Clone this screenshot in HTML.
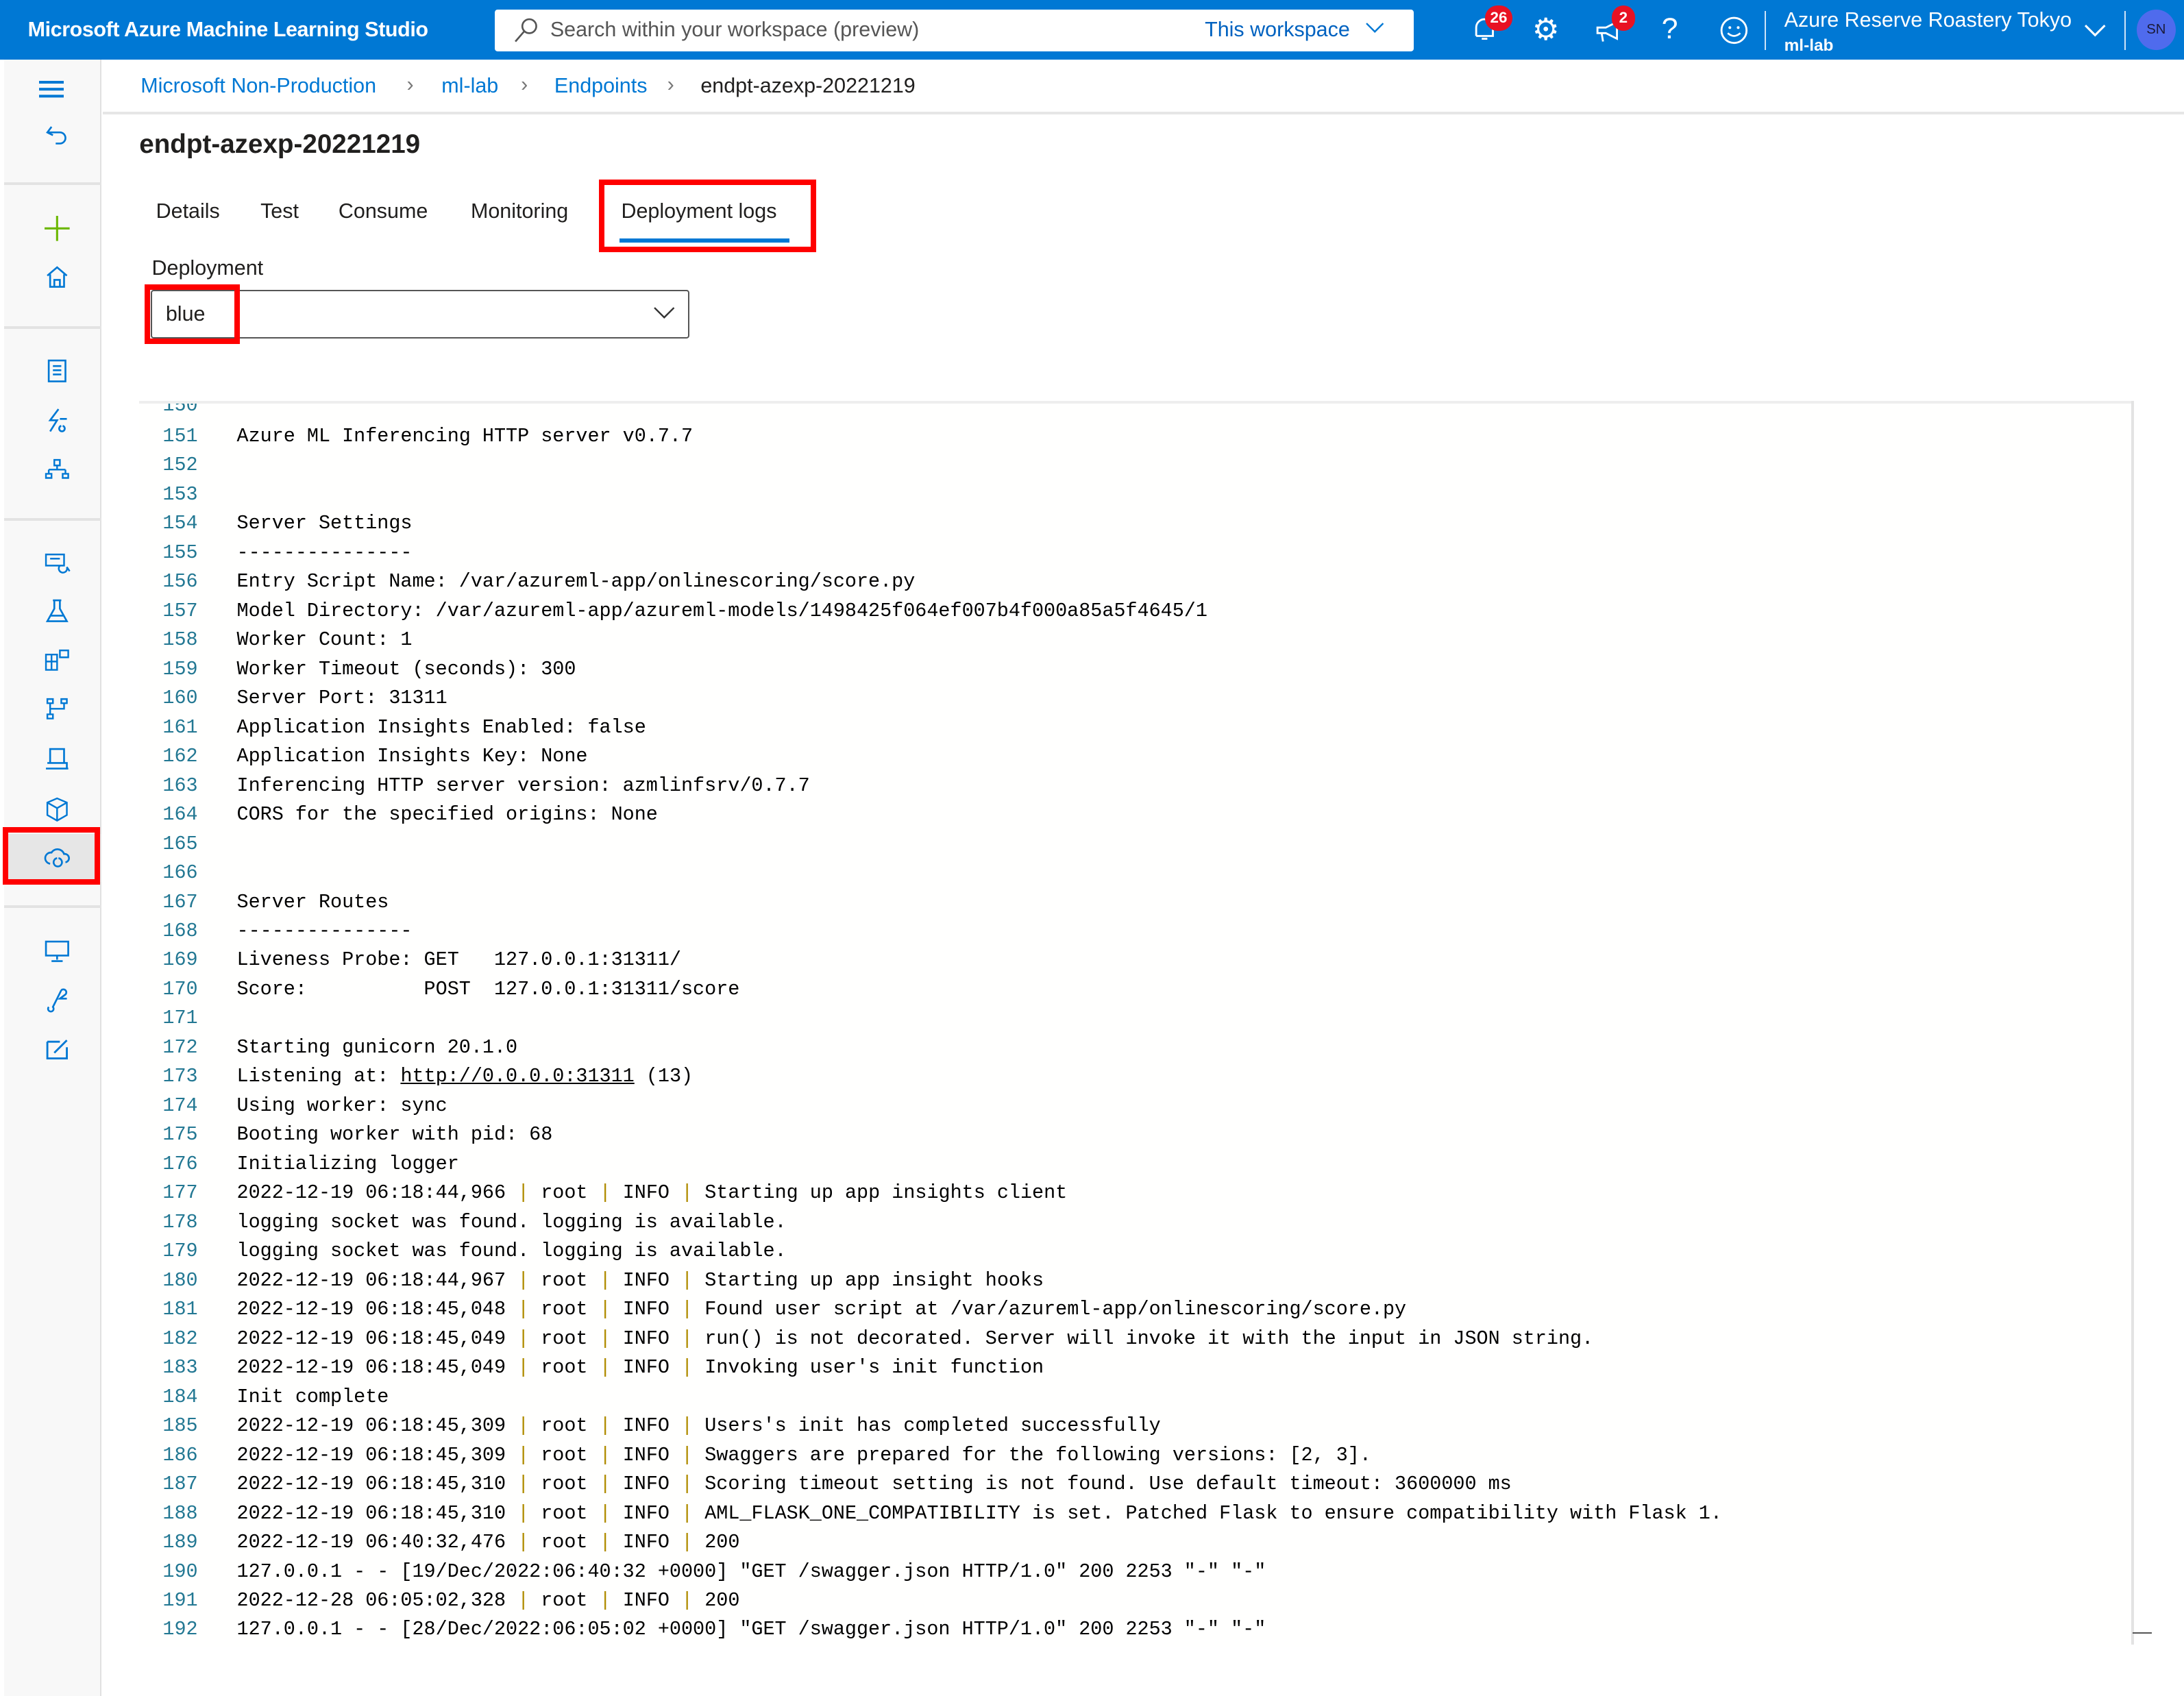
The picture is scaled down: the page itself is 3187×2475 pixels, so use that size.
<!DOCTYPE html>
<html><head><meta charset="utf-8"><style>
*{margin:0;padding:0;box-sizing:border-box}
html,body{width:3187px;height:2475px;overflow:hidden;background:#fff}
#r{zoom:2.0325;position:relative;width:1568px;height:1218px;font-family:"Liberation Sans",sans-serif;color:#201f1e}
.a{position:absolute}
.hdr{left:0;top:0;width:1568px;height:43px;background:#0078d4}
.side{left:3px;top:43px;width:70px;height:1175px;background:#f8f8f8;border-right:1px solid #e1e1e1}
.sep{position:absolute;left:0;width:70px;height:2px;background:#e3e3e3}
.ic{position:absolute;left:28px;width:20px;height:20px}
.log{left:100px;top:288px;width:1430px;height:895px;background:#fffffe;border-top:2px solid #eee;overflow:hidden;font-family:"Liberation Mono",monospace;font-size:14px;color:#000}
.ln{position:absolute;left:0;width:42px;text-align:right;color:#237893}
.tx{position:absolute;left:70px;white-space:pre}
.p{color:#b08c00}
.red{position:absolute;border:4px solid #f00}
</style></head><body><div id="r">
<div class="a hdr"></div>
<div class="a" style="left:20px;top:13px;color:#fff;font-size:15px;font-weight:bold;letter-spacing:-0.2px">Microsoft Azure Machine Learning Studio</div>
<div class="a" style="left:355px;top:7px;width:660px;height:30px;background:#fff;border-radius:2px"></div>
<svg class="a" style="left:368px;top:12px" width="20" height="20" viewBox="0 0 20 20"><circle cx="12" cy="7" r="5" fill="none" stroke="#555" stroke-width="1.3"/><path d="M8.5 10.5 L2 18" stroke="#555" stroke-width="1.3"/></svg>
<div class="a" style="left:395px;top:13px;font-size:15px;color:#555">Search within your workspace (preview)</div>
<div class="a" style="left:865px;top:13px;font-size:15px;color:#0062c0">This workspace</div>
<svg class="a" style="left:980px;top:15px" width="14" height="10"><path d="M1 2 L7 8 L13 2" fill="none" stroke="#0078d4" stroke-width="1.2"/></svg>
<svg class="a" style="left:1056px;top:11px" width="20" height="22"><path d="M4 15 V9 a6 6 0 0 1 12 0 V15 H4 M8 17 h4" fill="none" stroke="#fff" stroke-width="1.4"/></svg>
<div class="a" style="left:1066px;top:4px;width:20px;height:18px;border-radius:9px;background:#e81123;color:#fff;font-size:11px;text-align:center;line-height:18px;font-weight:bold">26</div>
<div class="a" style="left:1100px;top:8px;font-size:22px;color:#fff">⚙</div>
<svg class="a" style="left:1144px;top:13px" width="22" height="20"><path d="M3 7 H9 L17 3 V15 L9 11 H3 Z M6 11 L7 17" fill="none" stroke="#fff" stroke-width="1.4"/></svg>
<div class="a" style="left:1157px;top:4px;width:17px;height:18px;border-radius:9px;background:#e81123;color:#fff;font-size:11px;text-align:center;line-height:18px;font-weight:bold">2</div>
<div class="a" style="left:1193px;top:9px;font-size:21px;color:#fff">?</div>
<svg class="a" style="left:1234px;top:11px" width="22" height="22"><circle cx="11" cy="11" r="9" fill="none" stroke="#fff" stroke-width="1.4"/><circle cx="8" cy="9" r="1" fill="#fff"/><circle cx="14" cy="9" r="1" fill="#fff"/><path d="M6.5 13 Q11 17 15.5 13" fill="none" stroke="#fff" stroke-width="1.3"/></svg>
<div class="a" style="left:1267px;top:8px;width:1px;height:28px;background:#cfe4f7"></div>
<div class="a" style="left:1281px;top:6px;color:#fff;font-size:15px">Azure Reserve Roastery Tokyo</div>
<div class="a" style="left:1281px;top:26px;color:#fff;font-size:12px;font-weight:bold">ml-lab</div>
<svg class="a" style="left:1496px;top:16px" width="16" height="12"><path d="M1 2 L8 9 L15 2" fill="none" stroke="#fff" stroke-width="1.5"/></svg>
<div class="a" style="left:1525px;top:8px;width:1px;height:28px;background:#cfe4f7"></div>
<div class="a" style="left:1534px;top:7px;width:28px;height:29px;border-radius:50%;background:#4f6bed;color:#1b1b3a;font-size:10px;text-align:center;line-height:29px">SN</div>

<div class="a side">
<div style="position:absolute;left:25px;top:15px;width:18px;height:2px;background:#0078d4;box-shadow:0 5px 0 #0078d4,0 10px 0 #0078d4"></div>
<svg class="ic" style="top:45px" viewBox="0 0 20 20"><path d="M6 3 L3 7 L7 9 M3 7 H12 a4 4 0 0 1 0 8 H9" fill="none" stroke="#0078d4" stroke-width="1.3"/></svg>
<div class="sep" style="top:88px"></div>
<svg class="ic" style="top:111px" viewBox="0 0 20 20"><path d="M10 1 V19 M1 10 H19" stroke="#6bb700" stroke-width="1.5"/></svg>
<svg class="ic" style="top:146px" viewBox="0 0 20 20"><path d="M3 9 L10 3 L17 9 M5 8 V17 H15 V8 M8 17 V12 H12 V17" fill="none" stroke="#0078d4" stroke-width="1.3"/></svg>
<div class="sep" style="top:191px"></div>
<svg class="ic" style="top:213px" viewBox="0 0 20 20"><path d="M4 3 H16 V18 H4 Z M7 7 H13 M7 10 H13 M7 13 H13" fill="none" stroke="#0078d4" stroke-width="1.3"/></svg>
<svg class="ic" style="top:249px" viewBox="0 0 20 20"><path d="M11 2 L5 10 H10 L5 18 M12 9 h5 M13 14 a2 2 0 1 0 1 0" fill="none" stroke="#0078d4" stroke-width="1.3"/></svg>
<svg class="ic" style="top:284px" viewBox="0 0 20 20"><path d="M8 3 H12 V7 H8 Z M10 7 V10 M4 10 H16 M4 10 V13 M16 10 V13 M2 13 H6 V16 H2 Z M14 13 H18 V16 H14 Z" fill="none" stroke="#0078d4" stroke-width="1.2"/></svg>
<div class="sep" style="top:329px"></div>
<svg class="ic" style="top:351px" viewBox="0 0 20 20"><path d="M2 4 H15 V12 H2 Z M5 7 H12 M12 12 a3 3 0 1 0 5 1 L19 16" fill="none" stroke="#0078d4" stroke-width="1.2"/></svg>
<svg class="ic" style="top:386px" viewBox="0 0 20 20"><path d="M7 2 H13 M8 2 V8 L3 17 H17 L12 8 V2 M5 13 H15" fill="none" stroke="#0078d4" stroke-width="1.3"/></svg>
<svg class="ic" style="top:421px" viewBox="0 0 20 20"><path d="M2 6 H10 V17 H2 Z M2 11 H10 M6 6 V17 M12 3 H18 V8 H12 Z" fill="none" stroke="#0078d4" stroke-width="1.2"/></svg>
<svg class="ic" style="top:456px" viewBox="0 0 20 20"><path d="M3 3 H7 V6 H3 Z M13 3 H17 V6 H13 Z M3 14 H7 V17 H3 Z M5 6 V14 M5 10 H15 V6" fill="none" stroke="#0078d4" stroke-width="1.2"/></svg>
<svg class="ic" style="top:492px" viewBox="0 0 20 20"><path d="M5 3 H15 V13 H5 Z M2 17 H18 M3 13 H17 V17" fill="none" stroke="#0078d4" stroke-width="1.3"/></svg>
<svg class="ic" style="top:528px" viewBox="0 0 20 20"><path d="M10 2 L17 5 V14 L10 18 L3 14 V5 Z M3 5 L10 9 L17 5 M10 9 V18" fill="none" stroke="#0078d4" stroke-width="1.2"/></svg>
<div style="position:absolute;left:0;top:556px;width:70px;height:34px;background:#e6e6e6"></div>
<svg class="ic" style="top:563px" viewBox="0 0 20 20"><path d="M5 14 a4 4 0 0 1 1-8 a5 5 0 0 1 9 1 a3 3 0 0 1 1 6 M10 10 a3 3 0 1 0 1 0" fill="none" stroke="#0078d4" stroke-width="1.3"/></svg>
<div class="sep" style="top:607px"></div>
<svg class="ic" style="top:630px" viewBox="0 0 20 20"><path d="M2 3 H18 V13 H2 Z M10 13 V16 M6 17 H14" fill="none" stroke="#0078d4" stroke-width="1.3"/></svg>
<svg class="ic" style="top:665px" viewBox="0 0 20 20"><path d="M13 3 L7 15 a2 2 0 1 1 -3 0 M13 3 a2 2 0 1 1 3 3 L12 9 H17" fill="none" stroke="#0078d4" stroke-width="1.3"/></svg>
<svg class="ic" style="top:700px" viewBox="0 0 20 20"><path d="M3 5 H12 M3 5 V17 H17 V9 M8 13 L17 4" fill="none" stroke="#0078d4" stroke-width="1.4"/></svg>
</div>
<div class="red" style="left:2px;top:594px;width:70px;height:41px"></div>

<div class="a" style="left:74px;top:80px;width:1494px;height:2px;background:#e6e6e6"></div>
<div class="a" style="left:101px;top:53px;font-size:15px;color:#0078d4">Microsoft Non-Production</div>
<div class="a" style="left:292px;top:52px;font-size:15px;color:#777">›</div>
<div class="a" style="left:317px;top:53px;font-size:15px;color:#0078d4">ml-lab</div>
<div class="a" style="left:374px;top:52px;font-size:15px;color:#777">›</div>
<div class="a" style="left:398px;top:53px;font-size:15px;color:#0078d4">Endpoints</div>
<div class="a" style="left:479px;top:52px;font-size:15px;color:#777">›</div>
<div class="a" style="left:503px;top:53px;font-size:15px;color:#201f1e">endpt-azexp-20221219</div>
<div class="a" style="left:100px;top:93px;font-size:19px;font-weight:bold;color:#201f1e">endpt-azexp-20221219</div>
<div class="a" style="left:112px;top:143px;font-size:15px">Details</div>
<div class="a" style="left:187px;top:143px;font-size:15px">Test</div>
<div class="a" style="left:243px;top:143px;font-size:15px">Consume</div>
<div class="a" style="left:338px;top:143px;font-size:15px">Monitoring</div>
<div class="a" style="left:446px;top:143px;font-size:15px">Deployment logs</div>
<div class="a" style="left:445px;top:171px;width:122px;height:3px;background:#0078d4"></div>
<div class="red" style="left:430px;top:129px;width:156px;height:52px"></div>
<div class="a" style="left:109px;top:184px;font-size:15px">Deployment</div>
<div class="a" style="left:108px;top:208px;width:387px;height:35px;border:1px solid #555;border-radius:2px"></div>
<div class="a" style="left:119px;top:217px;font-size:15px">blue</div>
<svg class="a" style="left:469px;top:219px" width="16" height="12"><path d="M1 2 L8 9 L15 2" fill="none" stroke="#333" stroke-width="1.2"/></svg>
<div class="red" style="left:104px;top:204px;width:68px;height:43px"></div>

<div class="a log">
<div class="ln" style="top:-7px">150</div>
</div>
<div class="a" style="left:1530px;top:288px;width:2px;height:893px;background:#e3e3e3"></div>
<div class="a" style="left:1531px;top:1172px;width:14px;height:1px;background:#555"></div>
<div class="a" style="left:100px;top:303px;font-family:'Liberation Mono',monospace;font-size:14px;line-height:20.9px;color:#000">
<div style="position:relative">
<div class="ln" style="top:0">151</div><div class="tx" style="top:0">Azure ML Inferencing HTTP server v0.7.7</div>
<div class="ln" style="top:20.9px">152</div>
<div class="ln" style="top:41.8px">153</div>
<div class="ln" style="top:62.7px">154</div><div class="tx" style="top:62.7px">Server Settings</div>
<div class="ln" style="top:83.6px">155</div><div class="tx" style="top:83.6px">---------------</div>
<div class="ln" style="top:104.5px">156</div><div class="tx" style="top:104.5px">Entry Script Name: /var/azureml-app/onlinescoring/score.py</div>
<div class="ln" style="top:125.4px">157</div><div class="tx" style="top:125.4px">Model Directory: /var/azureml-app/azureml-models/1498425f064ef007b4f000a85a5f4645/1</div>
<div class="ln" style="top:146.3px">158</div><div class="tx" style="top:146.3px">Worker Count: 1</div>
<div class="ln" style="top:167.2px">159</div><div class="tx" style="top:167.2px">Worker Timeout (seconds): 300</div>
<div class="ln" style="top:188.1px">160</div><div class="tx" style="top:188.1px">Server Port: 31311</div>
<div class="ln" style="top:209px">161</div><div class="tx" style="top:209px">Application Insights Enabled: false</div>
<div class="ln" style="top:229.9px">162</div><div class="tx" style="top:229.9px">Application Insights Key: None</div>
<div class="ln" style="top:250.8px">163</div><div class="tx" style="top:250.8px">Inferencing HTTP server version: azmlinfsrv/0.7.7</div>
<div class="ln" style="top:271.7px">164</div><div class="tx" style="top:271.7px">CORS for the specified origins: None</div>
<div class="ln" style="top:292.6px">165</div>
<div class="ln" style="top:313.5px">166</div>
<div class="ln" style="top:334.4px">167</div><div class="tx" style="top:334.4px">Server Routes</div>
<div class="ln" style="top:355.3px">168</div><div class="tx" style="top:355.3px">---------------</div>
<div class="ln" style="top:376.2px">169</div><div class="tx" style="top:376.2px">Liveness Probe: GET   127.0.0.1:31311/</div>
<div class="ln" style="top:397.1px">170</div><div class="tx" style="top:397.1px">Score:          POST  127.0.0.1:31311/score</div>
<div class="ln" style="top:418px">171</div>
<div class="ln" style="top:438.9px">172</div><div class="tx" style="top:438.9px">Starting gunicorn 20.1.0</div>
<div class="ln" style="top:459.8px">173</div><div class="tx" style="top:459.8px">Listening at: <u>http://0.0.0.0:31311</u> (13)</div>
<div class="ln" style="top:480.7px">174</div><div class="tx" style="top:480.7px">Using worker: sync</div>
<div class="ln" style="top:501.6px">175</div><div class="tx" style="top:501.6px">Booting worker with pid: 68</div>
<div class="ln" style="top:522.5px">176</div><div class="tx" style="top:522.5px">Initializing logger</div>
<div class="ln" style="top:543.4px">177</div><div class="tx" style="top:543.4px">2022-12-19 06:18:44,966 <span class="p">|</span> root <span class="p">|</span> INFO <span class="p">|</span> Starting up app insights client</div>
<div class="ln" style="top:564.3px">178</div><div class="tx" style="top:564.3px">logging socket was found. logging is available.</div>
<div class="ln" style="top:585.2px">179</div><div class="tx" style="top:585.2px">logging socket was found. logging is available.</div>
<div class="ln" style="top:606.1px">180</div><div class="tx" style="top:606.1px">2022-12-19 06:18:44,967 <span class="p">|</span> root <span class="p">|</span> INFO <span class="p">|</span> Starting up app insight hooks</div>
<div class="ln" style="top:627px">181</div><div class="tx" style="top:627px">2022-12-19 06:18:45,048 <span class="p">|</span> root <span class="p">|</span> INFO <span class="p">|</span> Found user script at /var/azureml-app/onlinescoring/score.py</div>
<div class="ln" style="top:647.9px">182</div><div class="tx" style="top:647.9px">2022-12-19 06:18:45,049 <span class="p">|</span> root <span class="p">|</span> INFO <span class="p">|</span> run() is not decorated. Server will invoke it with the input in JSON string.</div>
<div class="ln" style="top:668.8px">183</div><div class="tx" style="top:668.8px">2022-12-19 06:18:45,049 <span class="p">|</span> root <span class="p">|</span> INFO <span class="p">|</span> Invoking user's init function</div>
<div class="ln" style="top:689.7px">184</div><div class="tx" style="top:689.7px">Init complete</div>
<div class="ln" style="top:710.6px">185</div><div class="tx" style="top:710.6px">2022-12-19 06:18:45,309 <span class="p">|</span> root <span class="p">|</span> INFO <span class="p">|</span> Users's init has completed successfully</div>
<div class="ln" style="top:731.5px">186</div><div class="tx" style="top:731.5px">2022-12-19 06:18:45,309 <span class="p">|</span> root <span class="p">|</span> INFO <span class="p">|</span> Swaggers are prepared for the following versions: [2, 3].</div>
<div class="ln" style="top:752.4px">187</div><div class="tx" style="top:752.4px">2022-12-19 06:18:45,310 <span class="p">|</span> root <span class="p">|</span> INFO <span class="p">|</span> Scoring timeout setting is not found. Use default timeout: 3600000 ms</div>
<div class="ln" style="top:773.3px">188</div><div class="tx" style="top:773.3px">2022-12-19 06:18:45,310 <span class="p">|</span> root <span class="p">|</span> INFO <span class="p">|</span> AML_FLASK_ONE_COMPATIBILITY is set. Patched Flask to ensure compatibility with Flask 1.</div>
<div class="ln" style="top:794.2px">189</div><div class="tx" style="top:794.2px">2022-12-19 06:40:32,476 <span class="p">|</span> root <span class="p">|</span> INFO <span class="p">|</span> 200</div>
<div class="ln" style="top:815.1px">190</div><div class="tx" style="top:815.1px">127.0.0.1 - - [19/Dec/2022:06:40:32 +0000] "GET /swagger.json HTTP/1.0" 200 2253 "-" "-"</div>
<div class="ln" style="top:836px">191</div><div class="tx" style="top:836px">2022-12-28 06:05:02,328 <span class="p">|</span> root <span class="p">|</span> INFO <span class="p">|</span> 200</div>
<div class="ln" style="top:856.9px">192</div><div class="tx" style="top:856.9px">127.0.0.1 - - [28/Dec/2022:06:05:02 +0000] "GET /swagger.json HTTP/1.0" 200 2253 "-" "-"</div>
</div></div>
</div></body></html>
